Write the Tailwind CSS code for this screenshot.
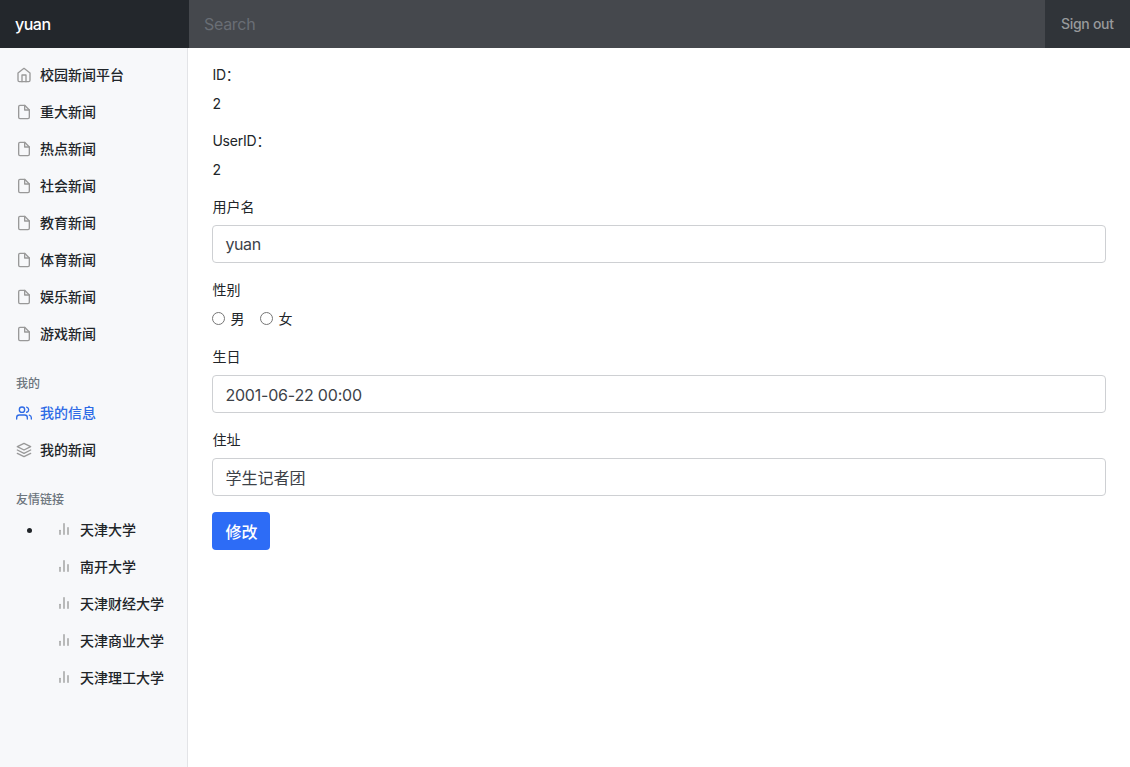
<!DOCTYPE html>
<html lang="zh">

<head>
    <meta charset="UTF-8">
    <meta name="viewport" content="width=device-width, initial-scale=1.0">
    <title>我的信息</title>
    <script src="https://cdn.jsdelivr.net/npm/@tailwindcss/browser@4"></script>
</head>

<body class="min-h-screen flex flex-col overflow-hidden bg-white text-[#212529] text-sm/[21px] font-['Inter','Noto_Sans_CJK_SC',sans-serif]">
    <!-- feather icons -->
    <svg class="hidden">
        <symbol id="home" viewBox="0 0 24 24">
            <path d="M3 9l9-7 9 7v11a2 2 0 0 1-2 2H5a2 2 0 0 1-2-2z"></path>
            <polyline points="9 22 9 12 15 12 15 22"></polyline>
        </symbol>
        <symbol id="file" viewBox="0 0 24 24">
            <path d="M13 2H6a2 2 0 0 0-2 2v16a2 2 0 0 0 2 2h12a2 2 0 0 0 2-2V9z"></path>
            <polyline points="13 2 13 9 20 9"></polyline>
        </symbol>
        <symbol id="users" viewBox="0 0 24 24">
            <path d="M17 21v-2a4 4 0 0 0-4-4H5a4 4 0 0 0-4 4v2"></path>
            <circle cx="9" cy="7" r="4"></circle>
            <path d="M23 21v-2a4 4 0 0 0-3-3.87"></path>
            <path d="M16 3.13a4 4 0 0 1 0 7.75"></path>
        </symbol>
        <symbol id="layers" viewBox="0 0 24 24">
            <polygon points="12 2 2 7 12 12 22 7 12 2"></polygon>
            <polyline points="2 17 12 22 22 17"></polyline>
            <polyline points="2 12 12 17 22 12"></polyline>
        </symbol>
        <symbol id="bar-chart" viewBox="0 0 24 24">
            <line x1="18" y1="20" x2="18" y2="10"></line>
            <line x1="12" y1="20" x2="12" y2="4"></line>
            <line x1="6" y1="20" x2="6" y2="14"></line>
        </symbol>
    </svg>

    <header class="flex h-12 bg-[#303439]">
        <a href="#" class="w-[189px] shrink-0 bg-[#23272c] pl-[15px] text-base/[48px] tracking-[-0.5px] font-medium text-white">yuan</a>
        <input type="text" placeholder="Search" aria-label="Search"
            class="min-w-0 grow bg-[#45484d] px-[15px] text-base tracking-[-0.3px] text-white placeholder:text-[#696e75] focus:outline-none">
        <a href="#" class="w-[85px] shrink-0 pl-4 text-sm/[48px] tracking-[-0.3px] font-medium text-[#989a9c]">Sign out</a>
    </header>

    <div class="flex grow">
        <nav class="w-[188px] shrink-0 border-r border-[#e3e4e7] bg-[#f7f8fa] pt-2 font-medium">
            <ul>
                <li><a href="#" class="flex items-center gap-2 px-4 py-2"><svg class="size-4 fill-none stroke-[#999] stroke-2 [stroke-linecap:round] [stroke-linejoin:round]"><use href="#home"/></svg>校园新闻平台</a></li>
                <li><a href="#" class="flex items-center gap-2 px-4 py-2"><svg class="size-4 fill-none stroke-[#999] stroke-2 [stroke-linecap:round] [stroke-linejoin:round]"><use href="#file"/></svg>重大新闻</a></li>
                <li><a href="#" class="flex items-center gap-2 px-4 py-2"><svg class="size-4 fill-none stroke-[#999] stroke-2 [stroke-linecap:round] [stroke-linejoin:round]"><use href="#file"/></svg>热点新闻</a></li>
                <li><a href="#" class="flex items-center gap-2 px-4 py-2"><svg class="size-4 fill-none stroke-[#999] stroke-2 [stroke-linecap:round] [stroke-linejoin:round]"><use href="#file"/></svg>社会新闻</a></li>
                <li><a href="#" class="flex items-center gap-2 px-4 py-2"><svg class="size-4 fill-none stroke-[#999] stroke-2 [stroke-linecap:round] [stroke-linejoin:round]"><use href="#file"/></svg>教育新闻</a></li>
                <li><a href="#" class="flex items-center gap-2 px-4 py-2"><svg class="size-4 fill-none stroke-[#999] stroke-2 [stroke-linecap:round] [stroke-linejoin:round]"><use href="#file"/></svg>体育新闻</a></li>
                <li><a href="#" class="flex items-center gap-2 px-4 py-2"><svg class="size-4 fill-none stroke-[#999] stroke-2 [stroke-linecap:round] [stroke-linejoin:round]"><use href="#file"/></svg>娱乐新闻</a></li>
                <li><a href="#" class="flex items-center gap-2 px-4 py-2"><svg class="size-4 fill-none stroke-[#999] stroke-2 [stroke-linecap:round] [stroke-linejoin:round]"><use href="#file"/></svg>游戏新闻</a></li>
            </ul>

            <h6 class="mt-[25px] mb-[3px] px-4 text-xs/[14.4px] text-[#6c757d]">我的</h6>
            <ul>
                <li><a href="#" class="flex items-center gap-2 px-4 py-2 text-[#2e6be6]"><svg class="size-4 fill-none stroke-current stroke-2 [stroke-linecap:round] [stroke-linejoin:round]"><use href="#users"/></svg>我的信息</a></li>
                <li><a href="#" class="flex items-center gap-2 px-4 py-2"><svg class="size-4 fill-none stroke-[#999] stroke-2 [stroke-linecap:round] [stroke-linejoin:round]"><use href="#layers"/></svg>我的新闻</a></li>
            </ul>

            <h6 class="mt-[25px] mb-[3px] px-4 text-xs/[14.4px] text-[#6c757d]">友情链接</h6>
            <div class="flex">
                <span class="mt-[17px] ml-[27px] mr-[8px] size-[5px] rounded-full bg-[#212529]"></span>
                <ul>
                    <li><a href="#" class="flex items-center gap-2 px-4 py-2"><svg class="size-4 fill-none stroke-[#999] stroke-2 [stroke-linecap:round] [stroke-linejoin:round]"><use href="#bar-chart"/></svg>天津大学</a></li>
                    <li><a href="#" class="flex items-center gap-2 px-4 py-2"><svg class="size-4 fill-none stroke-[#999] stroke-2 [stroke-linecap:round] [stroke-linejoin:round]"><use href="#bar-chart"/></svg>南开大学</a></li>
                    <li><a href="#" class="flex items-center gap-2 px-4 py-2"><svg class="size-4 fill-none stroke-[#999] stroke-2 [stroke-linecap:round] [stroke-linejoin:round]"><use href="#bar-chart"/></svg>天津财经大学</a></li>
                    <li><a href="#" class="flex items-center gap-2 px-4 py-2"><svg class="size-4 fill-none stroke-[#999] stroke-2 [stroke-linecap:round] [stroke-linejoin:round]"><use href="#bar-chart"/></svg>天津商业大学</a></li>
                    <li><a href="#" class="flex items-center gap-2 px-4 py-2"><svg class="size-4 fill-none stroke-[#999] stroke-2 [stroke-linecap:round] [stroke-linejoin:round]"><use href="#bar-chart"/></svg>天津理工大学</a></li>
                </ul>
            </div>
        </nav>

        <main class="grow pt-4 pr-6 pl-[24.4px]">
            <form class="flex flex-col gap-4">
                <div>
                    <label class="mb-2 block tracking-[-0.2px]">ID：</label>
                    <p>2</p>
                </div>
                <div>
                    <label class="mb-2 block tracking-[-0.2px]">UserID：</label>
                    <p>2</p>
                </div>
                <div>
                    <label for="username" class="mb-2 block">用户名</label>
                    <input type="text" id="username" value="yuan"
                        class="block h-[38px] w-full rounded border border-[#ced0d3] px-3 text-base tracking-[-0.4px] text-[#3d4248]">
                </div>
                <div>
                    <label class="mb-2 block">性别</label>
                    <div class="mb-px flex h-[21px] items-center">
                        <input type="radio" name="sex" id="male" class="mr-[5px] size-[13px]">
                        <label for="male" class="mr-4">男</label>
                        <input type="radio" name="sex" id="female" class="mr-[5px] size-[13px]">
                        <label for="female">女</label>
                    </div>
                </div>
                <div>
                    <label for="birthday" class="mb-2 block">生日</label>
                    <input type="text" id="birthday" value="2001-06-22 00:00"
                        class="block h-[38px] w-full rounded border border-[#ced0d3] px-3 pt-px text-base tracking-[-0.2px] text-[#3d4248]">
                </div>
                <div>
                    <label for="address" class="mb-2 block">住址</label>
                    <input type="text" id="address" value="学生记者团"
                        class="block h-[38px] w-full rounded border border-[#ced0d3] px-3 text-base text-[#3d4248]">
                </div>
                <button type="submit" class="h-[38px] w-[58px] rounded bg-[#2d6cf6] pt-px text-base font-medium text-white">修改</button>
            </form>
        </main>
    </div>
</body>

</html>
